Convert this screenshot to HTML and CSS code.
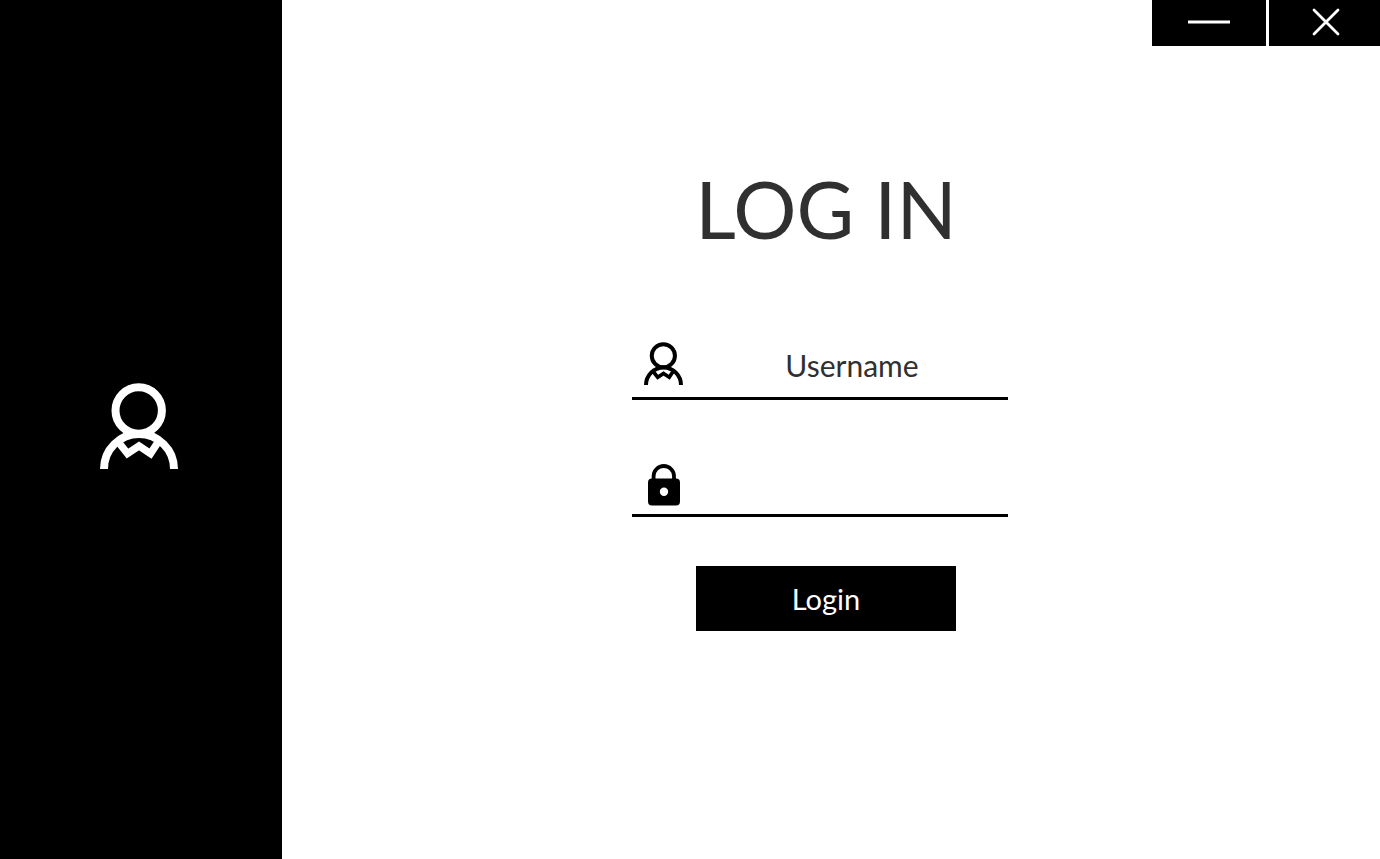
FILE: index.html
```html
<!DOCTYPE html>
<html lang="en">
<head>
<meta charset="utf-8">
<title>Log in</title>
<link rel="stylesheet" href="styles.css">
</head>
<body>
<svg class="defs" aria-hidden="true">
  <symbol id="person" viewBox="0 0 78 86">
    <g fill="none" stroke="currentColor">
      <circle cx="38.7" cy="27.5" r="23.2" stroke-width="8"/>
      <path d="M4 86A35 35 0 0 1 74 86" stroke-width="8"/>
      <path d="M19.5 60.5L27.5 70.6L39 63L50.5 70.6L57.5 60" stroke-width="7.4"/>
    </g>
  </symbol>
</svg>
<div class="window">
  <aside class="side">
    <svg class="side-icon" aria-hidden="true"><use href="#person"/></svg>
  </aside>
  <main class="main">
    <div class="controls">
      <button class="control" type="button" aria-label="Minimize">
        <svg class="control-icon" viewBox="0 0 42 28"><path d="M0 14H42" stroke="currentColor" stroke-width="2.8"/></svg>
      </button>
      <button class="control" type="button" aria-label="Close">
        <svg class="control-icon" viewBox="0 0 42 28"><path d="M10 2L34 26M34 2L10 26" stroke="currentColor" stroke-width="2.8" stroke-linecap="round"/></svg>
      </button>
    </div>
    <form class="login">
      <h1 class="title">LOG IN</h1>
      <div class="field">
        <label class="field-label" for="username" aria-label="Username">
          <svg class="person-icon" aria-hidden="true"><use href="#person"/></svg>
        </label>
        <input class="input" id="username" type="text" value="Username">
      </div>
      <div class="field">
        <label class="field-label field-label-low" for="password" aria-label="Password">
          <svg class="lock-icon" viewBox="0 0 32 42" aria-hidden="true">
            <path d="M5.6 16V12.2A10.2 10.2 0 0 1 26 12.2V16" fill="none" stroke="currentColor" stroke-width="3.8"/>
            <path fill-rule="evenodd" fill="currentColor" d="M4 14.5H28A4 4 0 0 1 32 18.5V37.5A4 4 0 0 1 28 41.5H4A4 4 0 0 1 0 37.5V18.5A4 4 0 0 1 4 14.5ZM16 23.6A4.2 4.2 0 1 0 16 32A4.2 4.2 0 1 0 16 23.6Z"/>
          </svg>
        </label>
        <input class="input" id="password" type="password">
      </div>
      <button class="submit" type="submit">Login</button>
    </form>
  </main>
</div>
</body>
</html>
```
FILE: styles.css
```css
* { box-sizing: border-box; }
body {
  margin: 0;
  background: #fff;
  color: #303030;
  font-family: "Gill Sans MT", "Gill Sans", Lato, sans-serif;
}
.defs { position: absolute; width: 0; height: 0; }
.window { display: flex; min-height: 100vh; }
.side {
  display: flex;
  flex: 0 0 282px;
  align-items: center;
  justify-content: center;
  padding: 0 4px 8px 0;
  background: #000;
  color: #fff;
}
.side-icon { width: 78px; height: 86px; }
.main { flex: 1; display: flex; flex-direction: column; }
.controls { display: flex; justify-content: flex-end; gap: 3px; }
.control {
  display: flex;
  align-items: center;
  justify-content: center;
  width: 114px;
  height: 46px;
  padding: 0 0 2px;
  border: 0;
  background: #000;
  color: #fff;
}
.control + .control { width: 111px; }
.control-icon { width: 42px; height: 28px; }
.login {
  display: flex;
  flex-direction: column;
  align-items: center;
  align-self: center;
  width: 376px;
  margin: 119px 22px 0 0;
}
.title {
  margin: 0 0 84px 12px;
  font-size: 79px;
  font-weight: 400;
  line-height: 88px;
}
.field {
  display: flex;
  width: 100%;
  height: 63px;
  margin-bottom: 54px;
  border-bottom: 3px solid #000;
}
.field-label {
  display: flex;
  flex: 0 0 64px;
  align-items: center;
  justify-content: center;
  padding: 0 2px 8px 0;
  color: #000;
}
.field-label-low { padding: 2px 0 0; }
.person-icon { width: 39px; height: 43px; }
.lock-icon { width: 32px; height: 42px; }
.input {
  flex: 1;
  min-width: 0;
  padding: 0 0 4px;
  border: 0;
  outline: 0;
  background: transparent;
  color: inherit;
  font: inherit;
  font-size: 30px;
  text-align: center;
}
.submit {
  width: 260px;
  height: 65px;
  margin: -5px 0 0 12px;
  border: 0;
  background: #000;
  color: #fff;
  font: inherit;
  font-size: 29px;
}
```
